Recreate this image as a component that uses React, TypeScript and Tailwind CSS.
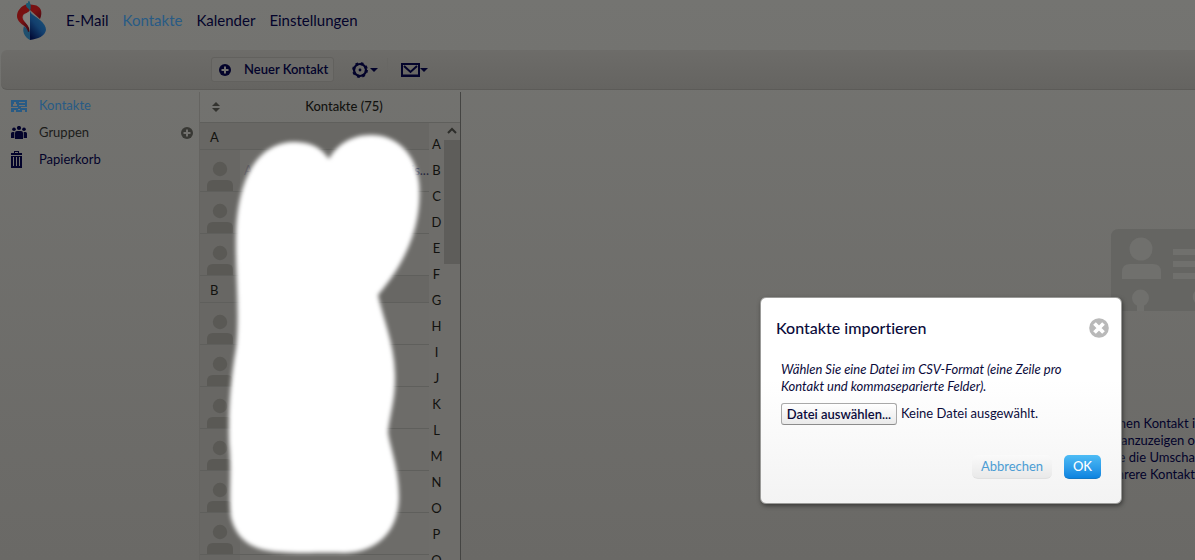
import React, { useState } from 'react';

const NAV_ITEMS = ['E-Mail', 'Kontakte', 'Kalender', 'Einstellungen'];
const LETTERS = 'ABCDEFGHIJKLMNOPQ'.split('');
const GROUPS = [
  { letter: 'A', contacts: [1, 2, 3] },
  { letter: 'B', contacts: [4, 5, 6, 7, 8, 9, 10] },
];

function Logo() {
  return (
    <svg viewBox="16 0 32 42" className="h-[42px] w-8" aria-hidden="true">
      <defs>
        <linearGradient id="red" x1="0" y1="0" x2="0.6" y2="1">
          <stop offset="0" stopColor="#74100f" />
          <stop offset="0.5" stopColor="#7a1112" />
          <stop offset="1" stopColor="#2c0714" />
        </linearGradient>
        <linearGradient id="blue" x1="0.8" y1="0.1" x2="0.2" y2="1">
          <stop offset="0" stopColor="#1d5578" />
          <stop offset="0.5" stopColor="#123f6e" />
          <stop offset="1" stopColor="#020d38" />
        </linearGradient>
      </defs>
      <path d="M27 4c-6 2-10 7-10 12 0 4 3 7 6 9 3 2 4 4 4 8l3 1-1-6c-1-3-3-5-5-7-2-3-2-5 0-7 2-1 4-1 6-4l10 9c3-7 1-13-6-14z" fill="url(#red)" />
      <path d="M24 15c2-2 4-2 6-4v20c0-3-2-6-4-8-2-3-4-5-2-8z" fill="#83827f" />
      <path d="M30 11c1 4 6 5 10 9 4 3 6 7 6 10-1 6-8 9-16 10z" fill="url(#blue)" />
      <path d="M24 26c-2 5 0 11 6 14V31l-2 1c0-2-2-4-4-6z" fill="#1f4f6e" />
      <path d="M26 5c0-2 1-2 2-2 0-3 2-2 2 0 1 2 1 5 0 8-1-3-4-3-4-6z" fill="#1d5870" />
    </svg>
  );
}

function PlusCircle({ className }: { className: string }) {
  return (
    <svg viewBox="0 0 12 12" className={className} aria-hidden="true">
      <circle cx="6" cy="6" r="6" fill="currentColor" />
      <path d="M6 2.5v7M2.5 6h7" stroke="#72716e" strokeWidth="2" />
    </svg>
  );
}

function CardIcon() {
  return (
    <svg viewBox="0 0 16 12" className="h-3 w-4" aria-hidden="true">
      <path d="M0 0h16v12H0z" fill="#285b85" />
      <path d="M2 6V4h1V2h2v2h1v2zM8 2h6v1H8zM8 5h6v1H8zM0 7h7v1H0zM10 7h6v1h-6zM3 10h2v2H3zM7 9h2v1H7zM11 10h3v2h-3z" fill="#72716e" />
    </svg>
  );
}

function PeopleIcon() {
  return (
    <svg viewBox="0 0 16 13" className="h-[13px] w-4" fill="#03032b" aria-hidden="true">
      <circle cx="8" cy="2" r="2.1" />
      <circle cx="3" cy="3.2" r="1.8" />
      <circle cx="13" cy="3.2" r="1.8" />
      <path d="M4 13V7q0-2 2-2h4q2 0 2 2v6zM0 12V7.5Q0 6 1.500 6H3.300v6zM12.700 12V6h1.800Q16 6 16 7.500V12z" />
    </svg>
  );
}

function TrashIcon() {
  return (
    <svg viewBox="0 0 11 17" className="h-[17px] w-[11px]" fill="#03032b" aria-hidden="true">
      <path d="M0 2h3V0h5v2h3v2H0zM4 1v1h3V1z" fillRule="evenodd" />
      <path d="M0 5h11v12H0z" />
      <path d="M2.500 6v9M5.500 6v9M8.500 6v9" stroke="#72716e" strokeWidth="1" />
    </svg>
  );
}

function GearIcon() {
  return (
    <svg viewBox="0 0 16 16" className="size-4" fill="none" stroke="#03032b" aria-hidden="true">
      <circle cx="8" cy="8" r="6" strokeWidth="2.200" />
      <circle cx="8" cy="8" r="6.400" strokeWidth="3" strokeDasharray="2.500 2.526" />
      <circle cx="8" cy="8" r="1.400" fill="#03032b" stroke="none" />
    </svg>
  );
}

function MailIcon() {
  return (
    <svg viewBox="0 0 19 14" className="h-[14px] w-[19px]" fill="none" stroke="#03032b" strokeWidth="2" aria-hidden="true">
      <path d="M1 1h17v11.500H1z" />
      <path d="M0 13h19" />
      <path d="M3 3l6.500 6L16 3" />
    </svg>
  );
}

function Caret() {
  return (
    <svg viewBox="0 0 8 4" className="h-1 w-2" aria-hidden="true">
      <path d="M0 0h8L4 4z" fill="#03032b" />
    </svg>
  );
}

function Avatar() {
  return (
    <svg viewBox="0 0 26 30" className="mt-auto ml-[7px] h-[30px] w-[26px]" fill="#5a5955" aria-hidden="true">
      <circle cx="13" cy="8" r="7.200" />
      <path d="M0 30v-5q0-6 6-6h14q6 0 6 6v5z" />
    </svg>
  );
}

function EmptyCard() {
  return (
    <svg viewBox="0 0 84 82" className="h-[82px] w-[84px]" fill="#70706d" aria-hidden="true">
      <path d="M0 82V8q0-8 8-8h76v82z" fill="#656562" />
      <circle cx="30" cy="20" r="11.500" />
      <path d="M11 50v-7q0-8 8-8h23q8 0 8 8v7z" />
      <path d="M62 20h22v6H62zM62 32h22v6H62zM62 44h22v6H62z" />
      <circle cx="29.500" cy="69" r="8.500" />
      <path d="M26 74h7v8h-7z" />
      <path d="M84 62q-3 3-2 8l2 4z" />
    </svg>
  );
}

// white smear hiding the personal names
function Redaction() {
  return (
    <svg viewBox="0 0 210 440" className="pointer-events-none absolute top-[31px] left-5 h-[440px] w-[210px]" aria-hidden="true">
      <filter id="soft" x="-10%" y="-10%" width="120%" height="120%">
        <feGaussianBlur stdDeviation="2.200" />
      </filter>
      <path
        d="M109 36C98 20 84 19 72 19C37 21 18 55 16 110C15 150 20 190 16 225C10 260 8 290 9 320C12 350 8 375 11 395C17 418 34 428 60 429C82 431 100 429 125 430C158 429 178 408 179 375C179 345 170 325 168 309C170 290 176 275 175 250C174 220 163 195 158 172C170 158 187 135 195 105C200 86 200 70 199 60C196 30 176 12 151 12C130 12 116 23 109 36Z"
        fill="#fff"
        filter="url(#soft)"
      />
    </svg>
  );
}

function Sidebar() {
  return (
    <aside className="w-[200px] shrink-0 border-r border-[#656461] text-[13px]">
      <ul className="leading-[27px]">
        <li>
          <a href="#kontakte" className="flex items-center pl-[11px] text-[#285b85]">
            <span className="w-7"><CardIcon /></span>
            Kontakte
          </a>
        </li>
        <li className="flex items-center justify-between pr-1.5">
          <a href="#gruppen" className="flex items-center pl-[11px] text-[#1c1c1a]">
            <span className="w-7"><PeopleIcon /></span>
            Gruppen
          </a>
          <button type="button" aria-label="Gruppe erstellen" className="text-[#383834]">
            <PlusCircle className="size-3" />
          </button>
        </li>
        <li>
          <a href="#papierkorb" className="flex items-center pl-[11px] text-[#03032b]">
            <span className="w-7"><TrashIcon /></span>
            Papierkorb
          </a>
        </li>
      </ul>
    </aside>
  );
}

function ContactList() {
  return (
    <section className="relative flex w-[261px] shrink-0 flex-col border-r border-[#444442] text-[13px] text-[#12120f]">
      <div className="flex h-[31px] shrink-0 items-center border-b border-[#5f5f5c] pl-3">
        <button type="button" aria-label="Sortieren">
          <svg viewBox="0 0 8 10" className="h-[10px] w-2" fill="#33332f" aria-hidden="true">
            <path d="M0 4l4-4 4 4zM0 6h8l-4 4z" />
          </svg>
        </button>
        <h2 className="flex-1 pr-3 pl-5 text-center font-medium">Kontakte (75)</h2>
      </div>

      <div className="flex min-h-0 flex-1">
        <div className="min-w-0 flex-1 overflow-hidden">
          {GROUPS.map((group) => (
            <div key={group.letter}>
              <div className="h-[27px] border-b border-[#5f5f5c] bg-[#686764] pl-[10px] leading-[29px]">{group.letter}</div>
              {group.contacts.map((id) => (
                <div key={id} className="flex h-[42px] border-b border-[#5f5f5c] bg-[#6d6c69]">
                  <div className="flex w-10 shrink-0 bg-[#686764]">
                    <Avatar />
                  </div>
                  <div className="flex flex-1 items-center justify-between pl-1 text-[#26263c]">
                    {id === 1 && (
                      <>
                        <span className="text-[#55555d]">A</span>
                        <span>is...</span>
                      </>
                    )}
                  </div>
                </div>
              ))}
            </div>
          ))}
        </div>
        <div className="w-[15px] shrink-0 overflow-hidden bg-[#6e6d6a] pt-2 text-center leading-[26px]">
          {LETTERS.map((letter) => (
            <div key={letter}>{letter}</div>
          ))}
        </div>
        <div className="w-4 shrink-0 bg-[#6e6d6a]">
          <svg viewBox="0 0 16 17" className="h-[17px] w-4" fill="none" stroke="#2d2d2a" strokeWidth="2" aria-hidden="true">
            <path d="M4 10l4-4 4 4" />
          </svg>
          <div className="h-[124px] bg-[#5e5d5a]" />
        </div>
      </div>
      <Redaction />
    </section>
  );
}

function ImportDialog() {
  const [fileName, setFileName] = useState('Keine Datei ausgewählt.');

  return (
    <div
      role="dialog"
      aria-labelledby="import-title"
      className="absolute top-[297px] right-[73px] w-[362px] rounded-md border border-[#9b9b99] bg-linear-to-b from-white from-40% to-[#f3f3f3] pt-5 pr-3 pb-6 pl-[15px] text-[13px] text-[#0b0b3b] shadow-[1px_2px_4px_#3c3c3a]"
    >
      <div className="flex items-center justify-between">
        <h2 id="import-title" className="text-base leading-5 font-medium">Kontakte importieren</h2>
        <button type="button" aria-label="Schliessen">
          <svg viewBox="0 0 20 20" className="size-5" aria-hidden="true">
            <circle cx="10" cy="10" r="9.800" fill="#b9b9b9" />
            <path d="M5.500 5.500l9 9M14.500 5.500l-9 9" stroke="#fff" strokeWidth="3.800" />
          </svg>
        </button>
      </div>
      <div className="mt-[23px] pl-[5px]">
        <p className="leading-[17px] italic">
          Wählen Sie eine Datei im CSV-Format (eine Zeile pro
          <br />
          Kontakt und kommaseparierte Felder).
        </p>
        <div className="mt-2 flex items-center gap-1">
          <label className="h-[22px] w-[116px] rounded-[3px] border border-[#a9a9a9] border-b-[#8c8c8c] bg-linear-to-b from-white to-[#eaeaea] text-center leading-5 font-semibold">
            Datei auswählen...
            <input
              type="file"
              accept=".csv"
              className="sr-only"
              onChange={(e) => setFileName(e.target.files?.[0]?.name ?? 'Keine Datei ausgewählt.')}
            />
          </label>
          <span>{fileName}</span>
        </div>
      </div>
      <div className="mt-[30px] flex justify-end gap-3 pr-2">
        <button type="button" className="h-6 w-20 rounded-md border-b border-[#e0e0e0] bg-linear-to-b from-[#fafafa] to-[#e9e9e9] text-[#4c9dd4]">
          Abbrechen
        </button>
        <button type="button" className="h-6 w-[37px] rounded-[5px] border-b border-[#1478c4] bg-linear-to-b from-[#4dbcf5] to-[#0b84e0] font-medium text-white">
          OK
        </button>
      </div>
    </div>
  );
}

export default function App() {
  return (
    <div className="relative flex h-screen flex-col overflow-hidden bg-linear-to-b from-[#747471] to-[#6a6966] font-['Lato',sans-serif] text-[#03032b] [font-variant-ligatures:none]">
      <header className="flex h-[50px] shrink-0 items-start gap-[18px] pl-4">
        <Logo />
        <nav className="flex gap-[14px] pt-2 text-[15px] leading-6">
          {NAV_ITEMS.map((item) => (
            <a key={item} href={`#${item}`} className={item === 'Kontakte' ? 'text-[#285b85]' : undefined}>
              {item}
            </a>
          ))}
        </nav>
      </header>

      <div className="ml-px flex h-10 shrink-0 items-center rounded-l-md border-b border-[#5c5b58] bg-linear-to-b from-[#6d6c69] to-[#656461] pl-[210px]">
        <button type="button" className="flex h-[25px] w-[123px] items-center gap-[13px] rounded-[3px] border border-[#62615e] bg-[#6d6c69] pl-[7px] text-[13px] font-semibold">
          <PlusCircle className="size-3" />
          Neuer Kontakt
        </button>
        <button type="button" aria-label="Aktionen" className="ml-[18px] flex items-center gap-0.5">
          <GearIcon />
          <Caret />
        </button>
        <button type="button" aria-label="E-Mail senden" className="ml-[9px] flex h-6 items-center border-l border-[#686764] pl-[13px]">
          <MailIcon />
          <Caret />
        </button>
      </div>

      <div className="flex min-h-0 flex-1 pt-0.5">
        <Sidebar />
        <ContactList />
        <main className="flex min-w-0 flex-1 flex-col items-end pt-[137px] text-right text-[13px] leading-[17px]">
          <EmptyCard />
          <p className="mt-[104px]">
            einen Kontakt i
            <br />
            anzuzeigen o
            <br />
            Sie die Umscha
            <br />
            mehrere Kontakt
          </p>
        </main>
      </div>

      <ImportDialog />
    </div>
  );
}
